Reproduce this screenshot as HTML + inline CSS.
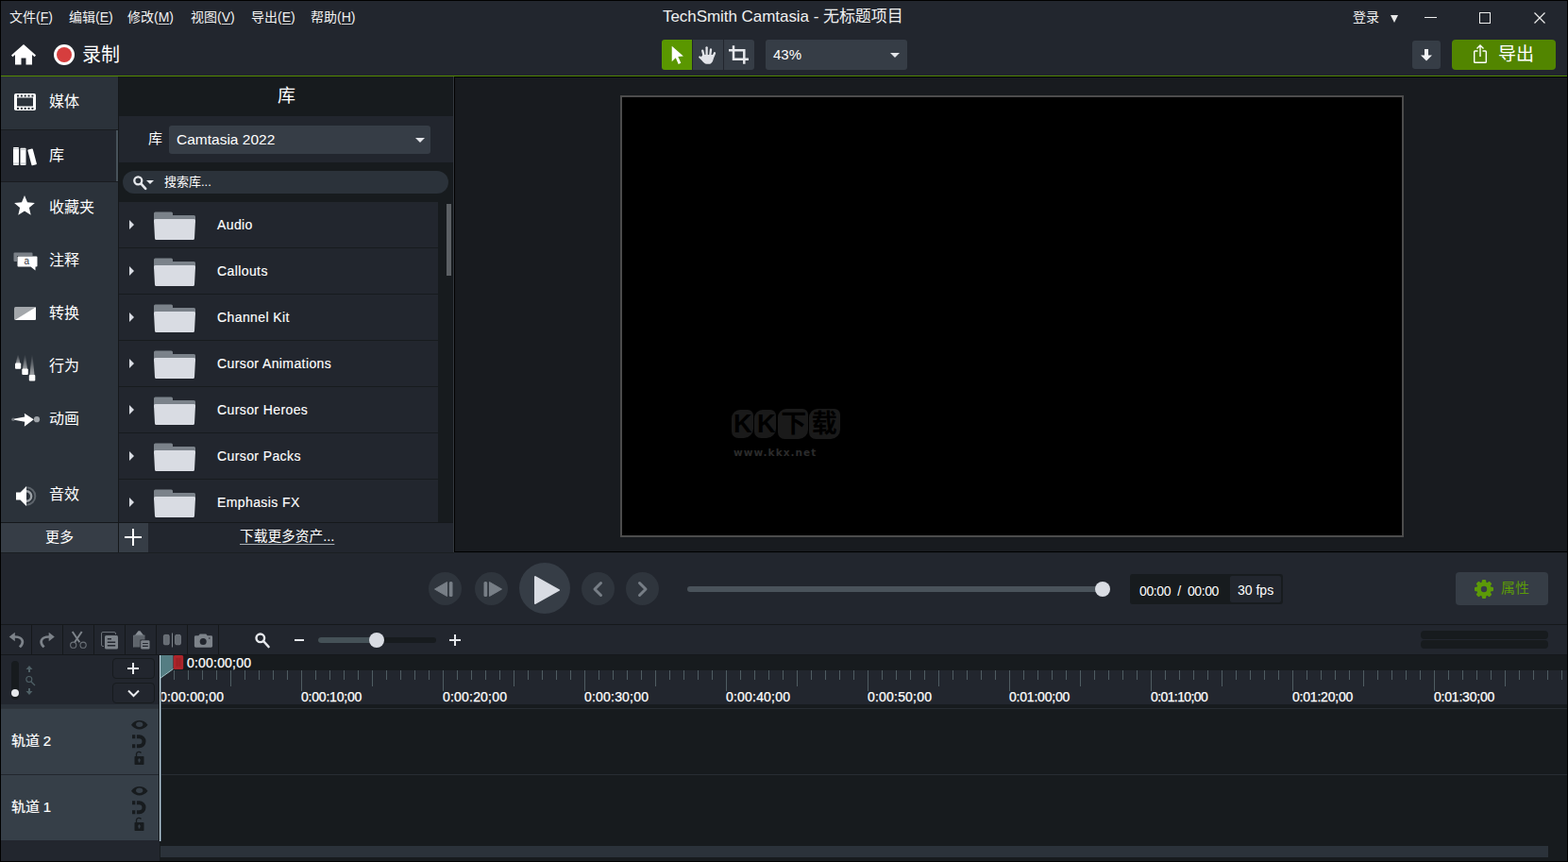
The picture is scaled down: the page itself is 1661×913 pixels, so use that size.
<!DOCTYPE html>
<html lang="zh-CN">
<head>
<meta charset="utf-8">
<title>TechSmith Camtasia - 无标题项目</title>
<style>
*{box-sizing:border-box;margin:0;padding:0}
html,body{width:1661px;height:913px;overflow:hidden;background:#000}
body{font-family:"Liberation Sans","Noto Sans CJK SC",sans-serif;color:#fff;font-size:14px;position:relative}
#app div,#app svg{position:absolute}
#app{position:absolute;left:0;top:0;width:1661px;height:913px;background:#22262e;overflow:hidden}
.t{white-space:nowrap;line-height:1}
svg{display:block;overflow:visible}
/* ---------- title / menu ---------- */
#menubar .t{top:11px;font-size:14px;color:#f2f2f2}
#menubar #title{left:702px;top:9px;font-size:17px;color:#f0f0f0;letter-spacing:-0.05px}
/* ---------- sidebar ---------- */
#sidebar{left:1px;top:81px;width:124px;height:472px;background:#2b323a}
.sbi{left:0;width:124px;height:56px}
.sbi .t{left:51px;font-size:16px;color:#fff}
/* ---------- library ---------- */
#lib{left:126px;top:81px;width:354px;height:504px;background:#22262e}
.row{left:0;width:338px;height:48px;background:#22262e}
.row .t{left:104px;top:17px;font-size:14px;color:#fff;letter-spacing:0.4px;-webkit-text-stroke:0.15px #fff}
.row .arr{left:11px;top:19px;width:0;height:0;border-left:5px solid #d9dce3;border-top:5px solid transparent;border-bottom:5px solid transparent}
.row svg{left:37px;top:10px}
.wm{height:30px;background:#1a1a1a;border-radius:9px 6px 10px 7px}
/* ---------- timeline ---------- */
.tl{font-size:14px;color:#fff;letter-spacing:0.2px;-webkit-text-stroke:0.25px #fff}
</style>
</head>
<body>
<div id="app">

<!-- ================= MENU BAR ================= -->
<div id="menubar" style="left:0;top:0;width:1661px;height:36px">
  <div class="t" style="left:10px">文件(F)</div>
  <div class="t" style="left:73px">编辑(E)</div>
  <div class="t" style="left:135px">修改(M)</div>
  <div class="t" style="left:202px">视图(V)</div>
  <div class="t" style="left:266px">导出(E)</div>
  <div class="t" style="left:329px">帮助(H)</div>
  <div style="left:42.7px;top:25px;width:8.6px;height:1px;background:#dcdcdc"></div>
  <div style="left:105.7px;top:25px;width:9.3px;height:1px;background:#dcdcdc"></div>
  <div style="left:167.7px;top:25px;width:11.7px;height:1px;background:#dcdcdc"></div>
  <div style="left:234.7px;top:25px;width:9.3px;height:1px;background:#dcdcdc"></div>
  <div style="left:298.7px;top:25px;width:9.3px;height:1px;background:#dcdcdc"></div>
  <div style="left:361.7px;top:25px;width:10.1px;height:1px;background:#dcdcdc"></div>
  <div class="t" id="title">TechSmith Camtasia - 无标题项目</div>
  <div class="t" style="left:1433px">登录</div>
  <div style="left:1472.500px;top:16px;width:0;height:0;border-top:8px solid #e8e8e8;border-left:4.5px solid transparent;border-right:4.5px solid transparent"></div>
  <div style="left:1509px;top:18px;width:13px;height:1px;background:#eee"></div>
  <div style="left:1567px;top:13px;width:12px;height:12px;border:1px solid #eee"></div>
  <svg style="left:1625px;top:13px" width="12" height="12" viewBox="0 0 12 12"><path d="M0.5 0.5L11.5 11.5M11.5 0.5L0.5 11.5" stroke="#eee" stroke-width="1.2" fill="none"/></svg>
</div>

<!-- ================= TOOLBAR ================= -->
<div id="toolbar" style="left:0;top:36px;width:1661px;height:44px">
  <svg style="left:12px;top:11px" width="26" height="22" viewBox="0 0 26 22"><path d="M13 0L26 11.5 24.6 13.2 22 11V21.5H15.5V14.5H10.500V21.500H4V11L1.400 13.200 0 11.500Z" fill="#fff"/></svg>
  <div style="left:57px;top:11px;width:22px;height:22px;border-radius:50%;background:#fff"></div>
  <div style="left:60px;top:14px;width:16px;height:16px;border-radius:50%;background:#d63e3e"></div>
  <div class="t" style="left:87px;top:12px;font-size:20px;color:#fff">录制</div>

  <div style="left:701px;top:6px;width:32px;height:32px;background:#5a9700;border-radius:3px 0 0 3px"></div>
  <div style="left:734px;top:6px;width:32px;height:32px;background:#363d46"></div>
  <div style="left:767px;top:6px;width:32px;height:32px;background:#363d46;border-radius:0 3px 3px 0"></div>
  <svg style="left:701px;top:6px" width="32" height="32" viewBox="0 0 32 32"><path d="M10.700 6.800L22.900 17.600 17.300 18 20.300 24.700 17.700 25.900 14.800 19.200 10.700 23.200Z" fill="#fff"/></svg>
  <svg style="left:734px;top:6px" width="32" height="32" viewBox="0 0 32 32"><g stroke="#e2e4e9" stroke-width="2.300" stroke-linecap="round" fill="none"><path d="M11.800 18L10.200 11.600"/><path d="M14.600 17.500V8.300"/><path d="M18.200 17.500L19 10.400"/><path d="M21 19L23 14.200"/><path d="M12 23L7.300 18.500"/></g><path d="M10.600 16H21.500L22 19C21.500 22.500 20 25.800 17 25.800H14.500C12.500 25.800 11 24 9.500 21.500L8.500 18.500Z" fill="#e2e4e9"/></svg>
  <svg style="left:767px;top:6px" width="32" height="32" viewBox="0 0 32 32"><path d="M10 6.300V20.700H26M5 11.300H21.300V25.800" stroke="#e6e8ec" stroke-width="2.500" fill="none"/></svg>

  <div style="left:811px;top:6px;width:150px;height:32px;background:#363d46;border-radius:3px"></div>
  <div class="t" style="left:819px;top:14px;font-size:15px;color:#fff">43%</div>
  <div style="left:943px;top:20px;width:0;height:0;border-top:5px solid #e4e6ea;border-left:5px solid transparent;border-right:5px solid transparent"></div>

  <div style="left:1496px;top:7px;width:30px;height:30px;background:#363d46;border-radius:3px"></div>
  <svg style="left:1505px;top:15px" width="12" height="14" viewBox="0 0 12 14"><path d="M4 1H8V7.500H12L6 13.500 0 7.500H4Z" fill="#f2f3f5"/></svg>
  <div style="left:1538px;top:6px;width:110px;height:32px;background:#528500;border-radius:4px"></div>
  <svg style="left:1561px;top:11px" width="14" height="20" viewBox="0 0 14 20"><path d="M4.500 7H1.500Q0.700 7 0.700 7.800V18.500Q0.700 19.300 1.500 19.300H12.500Q13.300 19.300 13.300 18.500V7.800Q13.300 7 12.500 7H9.500M7 13V1M3.500 4.500L7 1 10.500 4.500" stroke="#fff" stroke-width="1.400" fill="none"/></svg>
  <div class="t" style="left:1587px;top:12px;font-size:19px;color:#fff">导出</div>
</div>
<div style="left:0;top:80px;width:1661px;height:1px;background:#548900"></div>

<!-- ================= SIDEBAR ================= -->
<div id="sidebar">
  <div class="sbi" style="top:0"><svg style="left:14px;top:18px" width="23" height="18" viewBox="0 0 23 18"><rect x="0" y="0" width="23" height="18" rx="1.800" fill="#fff"/><rect x="3" y="4.500" width="17" height="9" fill="#2b323a"/><g fill="#2b323a"><rect x="3" y="1.500" width="2" height="2"/><rect x="6.900" y="1.500" width="2" height="2"/><rect x="10.700" y="1.500" width="2" height="2"/><rect x="14.500" y="1.500" width="2" height="2"/><rect x="18.400" y="1.500" width="2" height="2"/><rect x="3" y="14.900" width="2" height="2"/><rect x="6.900" y="14.900" width="2" height="2"/><rect x="10.700" y="14.900" width="2" height="2"/><rect x="14.500" y="14.900" width="2" height="2"/><rect x="18.400" y="14.900" width="2" height="2"/></g></svg><div class="t" style="top:19px">媒体</div></div>
  <div class="sbi" style="top:56px;height:56px;background:#22262e;border-top:1px solid #191c20;border-bottom:1px solid #191c20"><svg style="left:13px;top:18px" width="26" height="20" viewBox="0 0 26 20"><rect x="0" y="0" width="6" height="19" rx="0.800" fill="#fff"/><rect x="7.500" y="0.800" width="6" height="18.200" rx="0.800" fill="#fff"/><rect x="17.300" y="1.800" width="5.600" height="17.300" rx="0.800" fill="#fff" transform="rotate(-15 20 10.400)"/><path d="M0 1.500H6M0 17H6M7.500 2.300H13.500M7.500 17H13.500" stroke="#9aa0a6" stroke-width="0.700"/></svg><div class="t" style="top:19px">库</div>
    <div style="left:122px;top:0;width:2px;height:54px;background:#47525a"></div></div>
  <div class="sbi" style="top:112px"><svg style="left:14px;top:14px" width="22" height="21" viewBox="0 0 22 21"><path d="M11 0L14 7.300 21.900 7.900 15.900 13 17.700 20.700 11 16.500 4.300 20.700 6.100 13 0.100 7.900 8 7.300Z" fill="#fff"/></svg><div class="t" style="top:19px">收藏夹</div></div>
  <div class="sbi" style="top:168px"><svg style="left:13px;top:18px" width="26" height="20" viewBox="0 0 26 20"><path d="M4 10H1.500Q0.500 10 0.500 9V1.500Q0.500 0.500 1.500 0.500H19.500Q20.500 0.500 20.500 1.500V4H4Z" fill="#7a8087"/><path d="M5.500 4.500H24.500Q25.500 4.500 25.500 5.500V14.500Q25.500 15.500 24.500 15.500H23.500V19.500L18.500 15.500H5.500Q4.500 15.500 4.500 14.500V5.500Q4.500 4.500 5.500 4.500Z" fill="#fff"/><text x="14.200" y="13.400" style="font-family:'Liberation Sans',sans-serif;font-size:10px" fill="#2b323a" text-anchor="middle">a</text></svg><div class="t" style="top:19px">注释</div></div>
  <div class="sbi" style="top:224px"><svg style="left:14px;top:20px" width="23" height="14" viewBox="0 0 23 14"><rect x="0" y="0" width="23" height="14" rx="1.500" fill="#a3a7ab"/><path d="M23 0.300V12.500Q23 14 21.500 14H0.800Z" fill="#fff"/></svg><div class="t" style="top:19px">转换</div></div>
  <div class="sbi" style="top:280px"><svg style="left:15px;top:14px" width="23" height="30" viewBox="0 0 23 30"><defs><linearGradient id="bg1" x1="0" y1="0" x2="0" y2="1"><stop offset="0" stop-color="#fff" stop-opacity="0"/><stop offset="1" stop-color="#fff" stop-opacity="0.550"/></linearGradient></defs><path d="M2.700 0.500H3.500L5.400 10H0.800Z" fill="url(#bg1)"/><path d="M10.100 0.500H10.900L13 16H8Z" fill="url(#bg1)"/><path d="M17.600 0.500H18.400L20.500 22H15.500Z" fill="url(#bg1)"/><rect x="0" y="9.500" width="6.200" height="6.200" rx="1" fill="#fff"/><rect x="7.300" y="15.500" width="6.500" height="6.500" rx="1" fill="#fff"/><rect x="14.800" y="22" width="6.500" height="6.500" rx="1" fill="#fff"/></svg><div class="t" style="top:19px">行为</div></div>
  <div class="sbi" style="top:336px"><svg style="left:11px;top:20px" width="32" height="16" viewBox="0 0 32 16"><circle cx="2" cy="7.200" r="1.800" fill="#6f757b"/><path d="M3.200 6.600L14.200 4.600 13.800 0.800 23.800 7.200 13.800 14.800 14.200 9.800 3.200 7.800Z" fill="#fff"/><circle cx="27" cy="7.200" r="3.100" fill="#9ea3a8"/></svg><div class="t" style="top:19px">动画</div></div>
  <div class="sbi" style="top:416px"><svg style="left:16px;top:18px" width="23" height="21" viewBox="0 0 23 21"><path d="M11 1.200A9.300 9.300 0 0 1 11 19.800" stroke="#5d646b" stroke-width="2" fill="none"/><path d="M11 5.300A5.200 5.200 0 0 1 11 15.700" stroke="#9ea3a8" stroke-width="2.400" fill="none"/><path d="M0 6.500H4.500L11 0V21L4.500 14.500H0Z" fill="#fff"/></svg><div class="t" style="top:19px">音效</div></div>
</div>
<div style="left:1px;top:553px;width:124px;height:1px;background:#15181b"></div>
<div style="left:1px;top:554px;width:124px;height:31px;background:#363d46"><div class="t" style="left:47px;top:7px;font-size:15px;color:#fff">更多</div></div>
<div style="left:125px;top:81px;width:1px;height:504px;background:#15181b"></div>

<!-- ================= LIBRARY ================= -->
<div id="lib">
  <div style="left:0;top:0;width:354px;height:42px;background:#171b1e"></div>
  <div class="t" style="left:168px;top:11px;font-size:19px;color:#fff">库</div>
  <div class="t" style="left:31px;top:58px;font-size:15px;color:#fff">库</div>
  <div style="left:53px;top:52px;width:277px;height:30px;background:#363d46;border-radius:3px"></div>
  <div class="t" style="left:61px;top:59px;font-size:15.5px;color:#fff">Camtasia 2022</div>
  <div style="left:314px;top:65px;width:0;height:0;border-top:5px solid #e4e6ea;border-left:5px solid transparent;border-right:5px solid transparent"></div>
  <div style="left:0;top:91px;width:354px;height:382px;background:#171b1e"></div>
  <div style="left:4px;top:100px;width:345px;height:24px;background:#2b323a;border-radius:12px"></div>
  <svg style="left:15px;top:105px" width="14" height="15" viewBox="0 0 14 15"><circle cx="5.300" cy="5.300" r="4" stroke="#e6e8ec" stroke-width="2.300" fill="none"/><path d="M8.500 8.700L13.200 13.800" stroke="#e6e8ec" stroke-width="2.600" stroke-linecap="round"/></svg><div style="left:29px;top:110px;width:0;height:0;border-top:4px solid #e6e8ec;border-left:4px solid transparent;border-right:4px solid transparent"></div><div class="t" style="left:48px;top:105px;font-size:13px;color:#fff">搜索库...</div>

  <div class="row" style="top:133px"><div class="arr"></div><svg width="44" height="31" viewBox="0 0 44 31"><path d="M0 2Q0 0.500 1.500 0.500H18.500Q20 0.500 20 2V4H42.500Q44 4 44 5.500V12H0Z" fill="#7b828a"/><path d="M1.500 8H42.500Q44.100 8 44 9.500L43 28.500Q42.900 30 41.500 30H2.500Q1.100 30 1 28.500L0 9.500Q-0.100 8 1.500 8Z" fill="#d9dce3"/></svg><div class="t">Audio</div></div>
  <div class="row" style="top:182px"><div class="arr"></div><svg width="44" height="31" viewBox="0 0 44 31"><path d="M0 2Q0 0.500 1.500 0.500H18.500Q20 0.500 20 2V4H42.500Q44 4 44 5.500V12H0Z" fill="#7b828a"/><path d="M1.500 8H42.500Q44.100 8 44 9.500L43 28.500Q42.900 30 41.500 30H2.500Q1.100 30 1 28.500L0 9.500Q-0.100 8 1.500 8Z" fill="#d9dce3"/></svg><div class="t">Callouts</div></div>
  <div class="row" style="top:231px"><div class="arr"></div><svg width="44" height="31" viewBox="0 0 44 31"><path d="M0 2Q0 0.500 1.500 0.500H18.500Q20 0.500 20 2V4H42.500Q44 4 44 5.500V12H0Z" fill="#7b828a"/><path d="M1.500 8H42.500Q44.100 8 44 9.500L43 28.500Q42.900 30 41.500 30H2.500Q1.100 30 1 28.500L0 9.500Q-0.100 8 1.500 8Z" fill="#d9dce3"/></svg><div class="t">Channel Kit</div></div>
  <div class="row" style="top:280px"><div class="arr"></div><svg width="44" height="31" viewBox="0 0 44 31"><path d="M0 2Q0 0.500 1.500 0.500H18.500Q20 0.500 20 2V4H42.500Q44 4 44 5.500V12H0Z" fill="#7b828a"/><path d="M1.500 8H42.500Q44.100 8 44 9.500L43 28.500Q42.900 30 41.500 30H2.500Q1.100 30 1 28.500L0 9.500Q-0.100 8 1.500 8Z" fill="#d9dce3"/></svg><div class="t">Cursor Animations</div></div>
  <div class="row" style="top:329px"><div class="arr"></div><svg width="44" height="31" viewBox="0 0 44 31"><path d="M0 2Q0 0.500 1.500 0.500H18.500Q20 0.500 20 2V4H42.500Q44 4 44 5.500V12H0Z" fill="#7b828a"/><path d="M1.500 8H42.500Q44.100 8 44 9.500L43 28.500Q42.900 30 41.500 30H2.500Q1.100 30 1 28.500L0 9.500Q-0.100 8 1.500 8Z" fill="#d9dce3"/></svg><div class="t">Cursor Heroes</div></div>
  <div class="row" style="top:378px"><div class="arr"></div><svg width="44" height="31" viewBox="0 0 44 31"><path d="M0 2Q0 0.500 1.500 0.500H18.500Q20 0.500 20 2V4H42.500Q44 4 44 5.500V12H0Z" fill="#7b828a"/><path d="M1.500 8H42.500Q44.100 8 44 9.500L43 28.500Q42.900 30 41.500 30H2.500Q1.100 30 1 28.500L0 9.500Q-0.100 8 1.500 8Z" fill="#d9dce3"/></svg><div class="t">Cursor Packs</div></div>
  <div class="row" style="top:427px;height:46px"><div class="arr"></div><svg width="44" height="31" viewBox="0 0 44 31"><path d="M0 2Q0 0.500 1.500 0.500H18.500Q20 0.500 20 2V4H42.500Q44 4 44 5.500V12H0Z" fill="#7b828a"/><path d="M1.500 8H42.500Q44.100 8 44 9.500L43 28.500Q42.900 30 41.500 30H2.500Q1.100 30 1 28.500L0 9.500Q-0.100 8 1.500 8Z" fill="#d9dce3"/></svg><div class="t">Emphasis FX</div></div>
  <div style="left:347px;top:135px;width:5px;height:76px;background:#5c6064"></div>

  <div style="left:0;top:472px;width:354px;height:1px;background:#15181b"></div>
  <div style="left:0;top:473px;width:31px;height:31px;background:#363d46"></div>
  <div style="left:6px;top:487px;width:18px;height:2px;background:#fff"></div>
  <div style="left:14px;top:479px;width:2px;height:18px;background:#fff"></div>
  <div class="t" style="left:128px;top:480px;font-size:14.7px;color:#fff;text-decoration:underline;text-decoration-thickness:1px;text-underline-offset:3px;text-decoration-color:#aab0b6">下载更多资产...</div>
</div>
<div style="left:480px;top:81px;width:1px;height:504px;background:#33383e"></div>
<div style="left:481px;top:81px;width:1px;height:504px;background:#000"></div>
<div style="left:481px;top:81px;width:1180px;height:1px;background:#000;z-index:2"></div>

<!-- ================= PREVIEW ================= -->
<div id="preview" style="left:482px;top:81px;width:1179px;height:503px;background:#181b1f">
  <div style="left:175px;top:20px;width:830px;height:468px;background:#000;border:2px solid #4c4c4c"></div>
  <div class="wm" style="left:293px;top:353px;width:23px"></div><div class="wm" style="left:317px;top:353px;width:23px"></div><div class="wm" style="left:342px;top:352px;width:32px;height:32px"></div><div class="wm" style="left:375px;top:352px;width:33px;height:32px"></div><div class="t" style="left:295px;top:355px;font-size:27px;font-weight:bold;color:#000;letter-spacing:5.6px">KK下载</div><div class="t" style="left:295px;top:393px;font-family:'DejaVu Sans','Liberation Sans',sans-serif;font-size:10.5px;font-weight:bold;color:#2b2b2b;letter-spacing:1.05px">www.kkx.net</div>
</div>
<div style="left:481px;top:584px;width:1180px;height:1px;background:#000"></div>
<div style="left:0;top:585px;width:481px;height:1px;background:#1a1e22"></div>
<div style="left:481px;top:585px;width:1180px;height:1px;background:#1f2329"></div>

<!-- ================= PLAYBACK ================= -->
<div id="playback" style="left:0;top:585px;width:1661px;height:76px">
  <div style="left:454px;top:21px;width:35px;height:35px;border-radius:50%;background:#2f353d"></div>
  <div style="left:503px;top:21px;width:35px;height:35px;border-radius:50%;background:#2f353d"></div>
  <div style="left:550px;top:11px;width:54px;height:54px;border-radius:50%;background:#363d46"></div>
  <div style="left:616px;top:21px;width:35px;height:35px;border-radius:50%;background:#2f353d"></div>
  <div style="left:663px;top:21px;width:35px;height:35px;border-radius:50%;background:#2f353d"></div>
  <svg style="left:460px;top:30px" width="22" height="18" viewBox="0 0 22 18"><path d="M0.500 9L13.500 1.500V16.500Z" fill="#777e86" stroke="#777e86" stroke-width="1" stroke-linejoin="round"/><rect x="15.800" y="1" width="3.700" height="16" rx="1.500" fill="#777e86"/></svg>
  <svg style="left:510px;top:30px" width="22" height="18" viewBox="0 0 22 18"><path d="M21.500 9L8.500 1.500V16.500Z" fill="#777e86" stroke="#777e86" stroke-width="1" stroke-linejoin="round"/><rect x="2.500" y="1" width="3.700" height="16" rx="1.500" fill="#777e86"/></svg>
  <svg style="left:566px;top:25px" width="27" height="30" viewBox="0 0 27 30"><path d="M1 1L26 15 1 29Z" fill="#d9dce3" stroke="#d9dce3" stroke-width="2" stroke-linejoin="round"/></svg>
  <svg style="left:627px;top:31px" width="12" height="16" viewBox="0 0 12 16"><path d="M9.500 1.500L3 8 9.500 14.500" stroke="#777e86" stroke-width="3" fill="none" stroke-linecap="round" stroke-linejoin="round"/></svg>
  <svg style="left:675px;top:31px" width="12" height="16" viewBox="0 0 12 16"><path d="M2.500 1.500L9 8 2.500 14.500" stroke="#777e86" stroke-width="3" fill="none" stroke-linecap="round" stroke-linejoin="round"/></svg>
  <div style="left:728px;top:36px;width:440px;height:6px;border-radius:3px;background:#4a535b"></div>
  <div style="left:1160px;top:31px;width:16px;height:16px;border-radius:50%;background:#d9dce3"></div>
  <div style="left:1197px;top:23px;width:162px;height:32px;background:#171b1e;border-radius:3px"></div>
  <div style="left:1303px;top:25px;width:54px;height:28px;background:#22262e;border-radius:2px"></div>
  <div class="t" style="left:1207px;top:34px;font-size:14px;color:#fff;letter-spacing:-0.4px;word-spacing:3.7px">00:00 / 00:00</div>
  <div class="t" style="left:1311px;top:33px;font-size:14px;color:#fff">30 fps</div>
  <div style="left:1542px;top:21px;width:98px;height:35px;background:#363d46;border-radius:4px"></div>
  <svg style="left:1562px;top:29px" width="20" height="20" viewBox="-10 -10 20 20"><g fill="#5c9a08"><rect x="-2.200" y="-10" width="4.400" height="6" rx="1.200" transform="rotate(0)"/><rect x="-2.200" y="-10" width="4.400" height="6" rx="1.200" transform="rotate(45)"/><rect x="-2.200" y="-10" width="4.400" height="6" rx="1.200" transform="rotate(90)"/><rect x="-2.200" y="-10" width="4.400" height="6" rx="1.200" transform="rotate(135)"/><rect x="-2.200" y="-10" width="4.400" height="6" rx="1.200" transform="rotate(180)"/><rect x="-2.200" y="-10" width="4.400" height="6" rx="1.200" transform="rotate(225)"/><rect x="-2.200" y="-10" width="4.400" height="6" rx="1.200" transform="rotate(270)"/><rect x="-2.200" y="-10" width="4.400" height="6" rx="1.200" transform="rotate(315)"/></g><circle r="5.500" stroke="#5c9a08" stroke-width="4.600" fill="none"/></svg><div class="t" style="left:1590px;top:30px;font-size:15px;color:#5c9a08">属性</div>
</div>

<!-- ================= TIMELINE TOOLBAR ================= -->
<div id="tltools" style="left:0;top:661px;width:1661px;height:33px">
  <div style="left:0;top:0;width:1661px;height:1px;background:#15181b"></div>
  <div style="left:0;top:32px;width:1661px;height:1px;background:#15181b"></div>
  <div style="left:33px;top:0;width:1px;height:32px;background:#15181b"></div>
  <div style="left:66px;top:0;width:1px;height:32px;background:#15181b"></div>
  <div style="left:99px;top:0;width:1px;height:32px;background:#15181b"></div>
  <div style="left:132px;top:0;width:1px;height:32px;background:#15181b"></div>
  <div style="left:165px;top:0;width:1px;height:32px;background:#15181b"></div>
  <div style="left:198px;top:0;width:1px;height:32px;background:#15181b"></div>
  <div style="left:231px;top:0;width:1px;height:32px;background:#15181b"></div>
  <svg style="left:0;top:0" width="33" height="33" viewBox="0 0 33 33"><path d="M9.700 13.500L15.800 8.700V18.300Z" fill="#7d838a"/><path d="M15 13.500C19.500 13.300 23.600 15.200 23.900 18.800 24 21 22.500 22.800 20.900 24.400" stroke="#7d838a" stroke-width="2.700" fill="none"/></svg>
  <svg style="left:33px;top:0" width="33" height="33" viewBox="0 0 33 33"><path d="M24.800 13.500L18.700 8.700V18.300Z" fill="#7d838a"/><path d="M19.500 13.500C15 13.300 10.900 15.200 10.600 18.800 10.500 21 12 22.800 13.600 24.400" stroke="#7d838a" stroke-width="2.700" fill="none"/></svg>
  <svg style="left:66px;top:0" width="33" height="33" viewBox="0 0 33 33"><path d="M10.700 8L18.300 19.300M20.700 8L13.100 19.300" stroke="#7d838a" stroke-width="2" fill="none"/><circle cx="11.700" cy="22.200" r="3.100" stroke="#6b7178" stroke-width="1.100" fill="none"/><circle cx="22.100" cy="22.200" r="3.100" stroke="#6b7178" stroke-width="1.100" fill="none"/></svg>
  <svg style="left:99px;top:0" width="33" height="33" viewBox="0 0 33 33"><path d="M11 23.500H10Q8.500 23.500 8.500 22V10Q8.500 8.500 10 8.500H22Q23.500 8.500 23.500 10V11" stroke="#6b7178" stroke-width="1" fill="none"/><rect x="12" y="12" width="14" height="14.500" rx="1.500" fill="#7d838a"/><path d="M14.800 15.800H19M14.800 19.300H23.200M14.800 22.800H23.200" stroke="#22262e" stroke-width="1.400"/></svg>
  <svg style="left:132px;top:0" width="33" height="33" viewBox="0 0 33 33"><path d="M9.500 12H21.500V16.500H16.500V24.500H9.500Z" fill="#5e646b"/><path d="M9.500 24.500V12H21.500" stroke="#70767d" stroke-width="0.800" fill="none"/><path d="M11 11.800L14.500 7.300H16.500L20 11.800Z" fill="#8a9097"/><rect x="17.200" y="17.200" width="9.300" height="9.300" rx="1.200" fill="#7d838a"/><path d="M19 20.500H24.800M19 23.300H24.800" stroke="#22262e" stroke-width="1.200"/></svg>
  <svg style="left:165px;top:0" width="33" height="33" viewBox="0 0 33 33"><rect x="8.400" y="11.400" width="5.800" height="10.400" rx="1.300" fill="#666c73" stroke="#7d838a" stroke-width="0.800"/><rect x="20.600" y="11.400" width="5.800" height="10.400" rx="1.300" fill="#666c73" stroke="#7d838a" stroke-width="0.800"/><rect x="17" y="9.500" width="1" height="15" fill="#7d838a"/></svg>
  <svg style="left:198px;top:0" width="33" height="33" viewBox="0 0 33 33"><path d="M9.300 12.300H12.300L13.700 10.500H20.300L21.700 12.300H25.700Q27.100 12.300 27.100 13.700V23.300Q27.100 24.700 25.700 24.700H9.300Q7.900 24.700 7.900 23.300V13.700Q7.900 12.300 9.300 12.300Z" fill="#7d838a"/><circle cx="17.200" cy="18.400" r="3.500" fill="#22262e"/><circle cx="23.800" cy="15" r="0.800" fill="#22262e"/></svg>
  <svg style="left:270px;top:9px" width="16" height="17" viewBox="0 0 16 17"><circle cx="5.800" cy="5.800" r="4.300" stroke="#e6e8ec" stroke-width="2.400" fill="none"/><path d="M9.500 9.500L14.500 15" stroke="#e6e8ec" stroke-width="2.600" stroke-linecap="round"/></svg>
  <div style="left:312px;top:16px;width:10px;height:2px;background:#e6e8ec"></div>
  <div style="left:337px;top:14px;width:125px;height:6px;border-radius:3px;background:#171b1e"></div>
  <div style="left:337px;top:14px;width:62px;height:6px;border-radius:3px;background:#455157"></div>
  <div style="left:391px;top:9px;width:16px;height:16px;border-radius:50%;background:#d9dce3"></div>
  <div style="left:476px;top:16px;width:12px;height:2px;background:#e6e8ec"></div>
  <div style="left:481px;top:11px;width:2px;height:12px;background:#e6e8ec"></div>
  <div style="left:1505px;top:7px;width:135px;height:9px;border-radius:4px;background:#171b1e"></div>
  <div style="left:1505px;top:17px;width:135px;height:9px;border-radius:4px;background:#171b1e"></div>
</div>

<!-- ================= TIMELINE ================= -->
<div id="timeline" style="left:0;top:694px;width:1661px;height:219px;background:#22262e">
  <div style="left:170px;top:0;width:1491px;height:16px;background:#171b1e"></div>
  <div style="left:184px;top:16px;width:1477px;height:10px;background:repeating-linear-gradient(90deg,#4f5c62 0,#4f5c62 1px,transparent 1px,transparent 15px)"></div>
  <div style="left:244px;top:16px;width:1417px;height:17px;background:repeating-linear-gradient(90deg,#4f5c62 0,#4f5c62 1px,transparent 1px,transparent 75px)"></div>
  <div style="left:319px;top:16px;width:1342px;height:22px;background:repeating-linear-gradient(90deg,#4f5c62 0,#4f5c62 1px,transparent 1px,transparent 150px)"></div>
  <div class="t tl" style="left:169px;top:37px">0:00:00;00</div>
  <div class="t tl" style="left:319px;top:37px;letter-spacing:-0.21px">0:00:10;00</div>
  <div class="t tl" style="left:469px;top:37px">0:00:20;00</div>
  <div class="t tl" style="left:619px;top:37px">0:00:30;00</div>
  <div class="t tl" style="left:769px;top:37px">0:00:40;00</div>
  <div class="t tl" style="left:919px;top:37px">0:00:50;00</div>
  <div class="t tl" style="left:1069px;top:37px;letter-spacing:-0.21px">0:01:00;00</div>
  <div class="t tl" style="left:1219px;top:37px;letter-spacing:-0.6px">0:01:10;00</div>
  <div class="t tl" style="left:1369px;top:37px;letter-spacing:-0.21px">0:01:20;00</div>
  <div class="t tl" style="left:1519px;top:37px;letter-spacing:-0.21px">0:01:30;00</div>
  <div class="t tl" style="left:198px;top:1px">0:00:00;00</div>
  <div style="left:12px;top:6px;width:8px;height:41px;border-radius:4px;background:#171b1e"></div>
  <div style="left:12px;top:36px;width:8px;height:8px;border-radius:50%;background:#e6e8ec"></div>
  <svg style="left:27px;top:11px" width="11" height="32" viewBox="0 0 11 32"><path d="M4 0L7.500 4H5V7H3V4H0.500ZM4 31L7.500 27H5V24H3V27H0.500Z" fill="#4f6066"/><circle cx="3.800" cy="14.500" r="3" stroke="#4f6066" stroke-width="1.100" fill="none"/><path d="M6 17L10 21" stroke="#4f6066" stroke-width="1.300"/></svg>
  <div style="left:119px;top:3px;width:45px;height:22px;border:1px solid #171b1e;border-radius:4px;background:#22262e"></div>
  <div style="left:119px;top:29px;width:45px;height:22px;border:1px solid #171b1e;border-radius:4px;background:#22262e"></div>
  <div style="left:135px;top:13px;width:12px;height:2px;background:#e9ebee"></div>
  <div style="left:140px;top:8px;width:2px;height:12px;background:#e9ebee"></div>
  <svg style="left:135px;top:36px" width="13" height="9" viewBox="0 0 13 9"><path d="M1 1.500L6.500 7 12 1.500" stroke="#e9ebee" stroke-width="2" fill="none"/></svg>
  <div style="left:0;top:52px;width:168px;height:4px;background:#2b323a"></div>
  <div style="left:0;top:56px;width:168px;height:1px;background:#2f353c"></div>
  <div style="left:168px;top:52px;width:1493px;height:4px;background:#171b1e"></div>
  <div style="left:169px;top:56px;width:1492px;height:1px;background:#272c32"></div>
  <div style="left:169px;top:57px;width:1492px;height:162px;background:#171b1e"></div>
  <div style="left:169px;top:126px;width:1492px;height:1px;background:#282d33"></div>
  <div style="left:1px;top:57px;width:167px;height:69px;background:#363f48"></div>
  <div style="left:1px;top:127px;width:167px;height:69px;background:#363f48"></div>
  <div style="left:168px;top:0;width:1px;height:196px;background:#171b1e"></div>
  <div style="left:1px;top:126px;width:167px;height:1px;background:#22272d"></div>
  <div class="t" style="left:12px;top:83px;font-size:15px;color:#fff;word-spacing:-0.5px;-webkit-text-stroke:0.2px #fff">轨道 2</div>
  <div class="t" style="left:12px;top:153px;font-size:15px;color:#fff;word-spacing:-0.5px;-webkit-text-stroke:0.2px #fff">轨道 1</div>
  <svg style="left:139px;top:69px" width="18" height="48" viewBox="0 0 18 48"><path d="M0 4.700C2.500 1.300 5.500 0 8.700 0S15 1.300 17.500 4.700C15 8.100 12 9.400 8.700 9.400S2.500 8.100 0 4.700Z" fill="#171b1e"/><ellipse cx="8.700" cy="4.300" rx="3.600" ry="2.700" fill="#363f48"/><path d="M1 17.200H8.500A5 5 0 0 1 8.500 27.200H1" stroke="#171b1e" stroke-width="4" fill="none"/><rect x="4.300" y="15" width="1.600" height="15" fill="#363f48"/><path d="M5.500 39V35.500A2.800 2.800 0 0 1 10.500 34.500" stroke="#171b1e" stroke-width="1.300" fill="none"/><rect x="3.500" y="38" width="10" height="9" rx="0.800" fill="#171b1e"/><path d="M8.500 40L10.300 42.500H9.300V44.500H7.700V42.500H6.700Z" fill="#363f48"/></svg>
  <svg style="left:139px;top:139px" width="18" height="48" viewBox="0 0 18 48"><path d="M0 4.700C2.500 1.300 5.500 0 8.700 0S15 1.300 17.500 4.700C15 8.100 12 9.400 8.700 9.400S2.500 8.100 0 4.700Z" fill="#171b1e"/><ellipse cx="8.700" cy="4.300" rx="3.600" ry="2.700" fill="#363f48"/><path d="M1 17.200H8.500A5 5 0 0 1 8.500 27.200H1" stroke="#171b1e" stroke-width="4" fill="none"/><rect x="4.300" y="15" width="1.600" height="15" fill="#363f48"/><path d="M5.500 39V35.500A2.800 2.800 0 0 1 10.500 34.500" stroke="#171b1e" stroke-width="1.300" fill="none"/><rect x="3.500" y="38" width="10" height="9" rx="0.800" fill="#171b1e"/><path d="M8.500 40L10.300 42.500H9.300V44.500H7.700V42.500H6.700Z" fill="#363f48"/></svg>
  <div style="left:169px;top:0;width:1px;height:197px;background:#c9dde9"></div>
  <div style="left:170px;top:0;width:1px;height:197px;background:#4a5a66"></div>
  <svg style="left:169px;top:0" width="26" height="26" viewBox="0 0 26 26"><path d="M0 0H14.500V14.500L0 25Z" fill="#547d83"/><path d="M14.500 14.500L0.500 24.500" stroke="#9fc0c4" stroke-width="1" fill="none"/><rect x="0" y="0" width="1" height="25" fill="#c9dde9"/><rect x="14.700" y="0" width="10.500" height="15" rx="1.500" fill="#ad242a"/><path d="M18.200 3V12M20 3V12M21.800 3V12" stroke="#8a1c21" stroke-width="0.700"/></svg>
  <div style="left:170px;top:202px;width:1470px;height:12px;background:#2b323a"></div>
</div>

<div style="left:0;top:0;width:1px;height:913px;background:#000"></div><div style="left:0;top:0;width:1661px;height:1px;background:#000"></div><div style="left:1660px;top:0;width:1px;height:913px;background:#000"></div><div style="left:0;top:912px;width:1661px;height:1px;background:#000"></div>
</div>
</body>
</html>
